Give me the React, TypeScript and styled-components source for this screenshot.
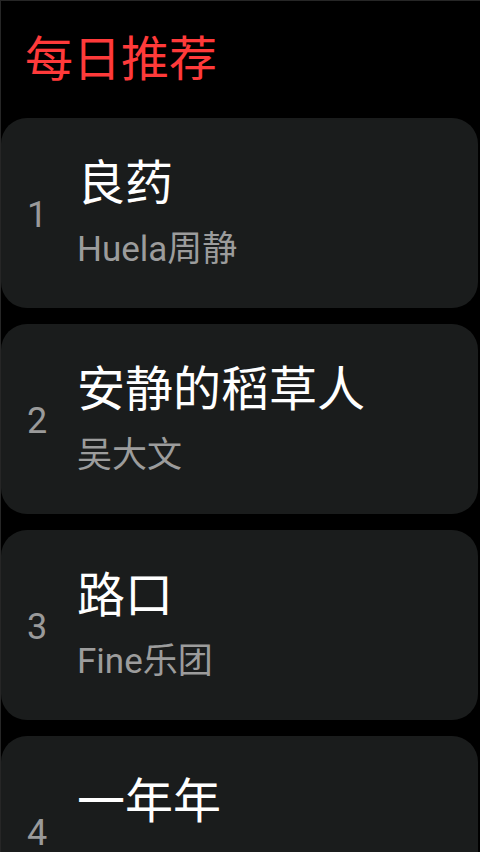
import React from "react";
import styled, { createGlobalStyle } from "styled-components";

const GlobalStyle = createGlobalStyle`
  html, body {
    margin: 0;
    padding: 0;
    background: #000;
  }
  body {
    font-family: Roboto, "Noto Sans CJK SC", sans-serif;
    overflow: hidden;
  }
`;

const Screen = styled.div`
  width: 480px;
  height: 852px;
  box-sizing: border-box;
  background: #000;
  border-top: 1px solid #262626;
  border-left: 1px solid #262626;
  overflow: hidden;
  display: flex;
  flex-direction: column;
`;

const Header = styled.h1`
  margin: 0;
  height: 117px;
  flex-shrink: 0;
  display: flex;
  align-items: center;
  padding: 0 0 0 24px;
  font-family: Roboto, "Noto Sans CJK SC", sans-serif;
  font-weight: 400;
  font-size: 48px;
  color: #ff3a3a;
  line-height: 1;
`;

const List = styled.div`
  flex-shrink: 0;
  display: flex;
  flex-direction: column;
  gap: 16px;
  padding-right: 2px;
`;

const Card = styled.div`
  height: 190px;
  flex-shrink: 0;
  background: #1a1c1c;
  border-radius: 26px;
  display: flex;
  align-items: center;
  padding-left: 26px;
`;

const Index = styled.div`
  width: 50px;
  flex-shrink: 0;
  font-family: Roboto, sans-serif;
  font-size: 36px;
  color: #9a9a9a;
  line-height: 1;
  padding-top: 4px;
`;

const Texts = styled.div`
  display: flex;
  flex-direction: column;
  gap: 21px;
  padding-top: 3px;
`;

const Title = styled.div`
  font-family: Roboto, "Noto Sans CJK SC", sans-serif;
  font-size: 48px;
  color: #ffffff;
  line-height: 50px;
`;

const Artist = styled.div`
  font-family: Roboto, "Noto Sans CJK SC", sans-serif;
  font-size: 35px;
  color: #9c9c9c;
  line-height: 40px;
`;

const songs = [
  { title: "良药", artist: "Huela周静" },
  { title: "安静的稻草人", artist: "吴大文" },
  { title: "路口", artist: "Fine乐团" },
  { title: "一年年", artist: "" },
];

export default function App() {
  return (
    <>
      <GlobalStyle />
      <Screen>
        <Header>每日推荐</Header>
        <List>
          {songs.map((s, i) => (
            <Card key={i}>
              <Index>{i + 1}</Index>
              <Texts>
                <Title>{s.title}</Title>
                <Artist>{s.artist || "\u00a0"}</Artist>
              </Texts>
            </Card>
          ))}
        </List>
      </Screen>
    </>
  );
}
